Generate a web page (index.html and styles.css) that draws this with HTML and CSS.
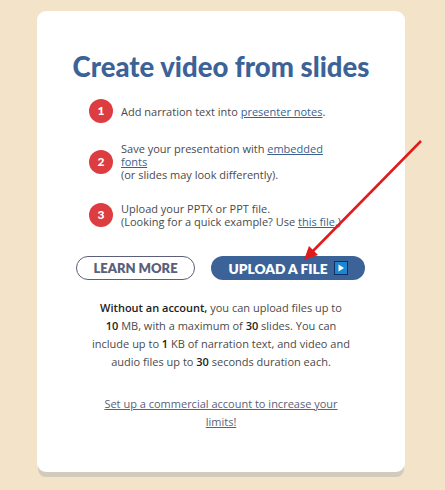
FILE: index.html
```html
<!DOCTYPE html>
<html lang="en">
<head>
    <meta charset="UTF-8">
    <meta name="viewport" content="width=device-width, initial-scale=1.0">
    <title>Create video from slides</title>
    <link rel="stylesheet" href="styles.css">
</head>
<body>

    <div class="card">
        <h1>Create video from slides</h1>

        <div class="steps">
            <div class="step">
                <span class="step-num">1</span>
                <div class="step-text">Add narration text into <a href="#">presenter notes</a>.</div>
            </div>
            <div class="step">
                <span class="step-num">2</span>
                <div class="step-text">Save your presentation with <a href="#">embedded fonts</a><br>(or slides may look differently).</div>
            </div>
            <div class="step step-last">
                <span class="step-num">3</span>
                <div class="step-text">Upload your PPTX or PPT file.<br>(Looking for a quick example? Use <a href="#">this file</a>.)</div>
            </div>
        </div>

        <div class="buttons">
            <button class="btn btn-outline">LEARN MORE</button>
            <button class="btn btn-solid">UPLOAD A FILE <span class="play-icon"><svg width="8" height="8" viewBox="0 0 8 8"><path d="M1.5 0.5 L7 4 L1.5 7.5 Z" fill="#fff"/></svg></span></button>
        </div>

        <p class="info"><b>Without an account,</b> you can upload files up to<br><b>10</b> MB, with a maximum of <b>30</b> slides. You can<br>include up to <b>1</b> KB of narration text, and video and<br>audio files up to <b>30</b> seconds duration each.</p>

        <p class="upgrade"><a href="#">Set up a commercial account to increase your limits!</a></p>
    </div>

    <!-- red annotation arrow drawn over the page -->
    <svg class="arrow" width="445" height="490" viewBox="0 0 445 490">
        <line x1="421" y1="141" x2="312" y2="252" stroke="#e01b1b" stroke-width="2.5"/>
        <path d="M304 260 L309 246 L318 255 Z" fill="#e01b1b"/>
    </svg>

</body>
</html>
```

FILE: styles.css
```css
body {
    margin: 0;
    padding: 11px 0 12px 37px;
    background-color: #f2e3c9;
    font-family: "Open Sans", sans-serif;
    color: #4a4a4a;
}

a {
    color: #3b5f8f;
}

.card {
    box-sizing: border-box;
    width: 368px;
    height: 461px;
    padding: 41px 22px 0;
    background-color: white;
    border-radius: 9px;
    box-shadow: 0 6px 0 -1px #d2cbbd;
}

h1 {
    margin: 0;
    font-family: Lato, sans-serif;
    font-size: 27.5px;
    font-weight: 900;
    line-height: 30px;
    text-align: center;
    color: #3b6398;
}

.steps {
    display: flex;
    flex-direction: column;
    gap: 19px;
    margin: 17px 0 0 30px;
}

.step {
    display: flex;
    align-items: center;
    gap: 8px;
}

.step-last {
    margin-top: 2px;
}

.step-num {
    flex: none;
    width: 24px;
    height: 24px;
    border-radius: 50%;
    background-color: #dd3c40;
    color: white;
    font-family: Lato, sans-serif;
    font-size: 12px;
    font-weight: 900;
    line-height: 24px;
    text-align: center;
}

.step-text {
    width: 222px;
    font-size: 11px;
    line-height: 13px;
}

.buttons {
    display: flex;
    gap: 16px;
    margin: 28px 0 0 17px;
}

.btn {
    box-sizing: border-box;
    height: 24px;
    padding: 0;
    border-radius: 12px;
    font-family: Lato, sans-serif;
    font-size: 13px;
    font-weight: 800;
}

.btn-outline {
    width: 119px;
    background: white;
    border: 1px solid #5b5f7a;
    color: #5b5f7a;
}

.btn-solid {
    display: flex;
    align-items: center;
    justify-content: center;
    gap: 6px;
    width: 154px;
    background-color: #3b6398;
    border: none;
    font-size: 13.7px;
    color: white;
}

.play-icon {
    display: flex;
    align-items: center;
    justify-content: center;
    width: 14px;
    height: 14px;
    background-color: #1c86d1;
    border: 1px solid #0d2f66;
    box-sizing: border-box;
}

.info, .upgrade {
    margin: 0;
    font-size: 11px;
    line-height: 18px;
    text-align: center;
}

.info {
    width: 270px;
    margin: 19px 0 0 27px;
}

.info b {
    font-weight: 600;
    color: #222;
}

.upgrade {
    width: 250px;
    margin: 24px 0 0 37px;
}

.upgrade a {
    color: #5b5f7a;
}

.arrow {
    position: absolute;
    top: 0;
    left: 0;
    pointer-events: none;
}
```
